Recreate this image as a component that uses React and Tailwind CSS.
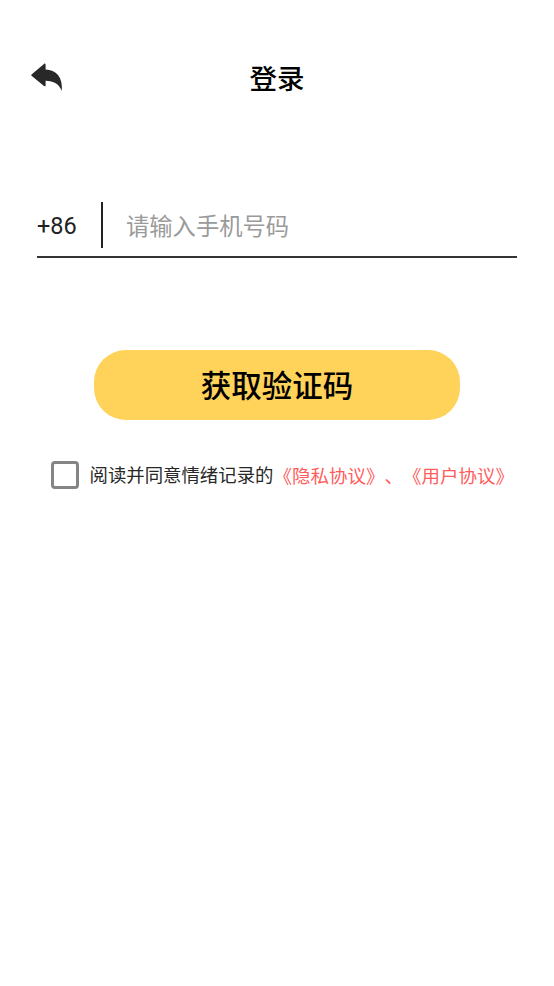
import React, { useState } from "react";

const LoginPage = () => {
  const [phone, setPhone] = useState("");
  const [agreed, setAgreed] = useState(false);

  return (
    <div className="min-h-screen bg-white font-[Roboto,'Noto_Sans_CJK_SC',sans-serif]">
      {/* Header */}
      <header className="grid h-[156px] grid-cols-[1fr_auto_1fr] items-center px-[30px]">
        <button aria-label="返回">
          <svg width="34" height="30" viewBox="0 0 34 30" fill="#282828">
            <path d="M1.500 11.500 14 1c.8-.7 1.600-.4 1.600.7v4.800C26 6.700 33 14 31.800 28c-3-7.500-8-10-16.200-10.300v4.500c0 1.200-.8 1.500-1.600.8L1.500 12.700c-.4-.4-.4-.8 0-1.200Z" />
          </svg>
        </button>
        <h1 className="pt-[3px] text-[27.500px] font-medium leading-10 text-black">登录</h1>
        <span />
      </header>

      {/* Phone number */}
      <div className="mx-[37px] mt-[46px] flex h-14 items-start border-b-2 border-[#333333]">
        <span className="w-16 text-[23.500px] leading-[48px] text-[#222222]">+86</span>
        <span className="h-[46px] w-0.5 bg-[#222222]" />
        <input
          type="tel"
          value={phone}
          onChange={(e) => setPhone(e.target.value)}
          placeholder="请输入手机号码"
          className="ml-[23px] h-[50px] flex-1 text-[23.300px] text-[#222222] outline-none placeholder:text-[#9a9a9a]"
        />
      </div>

      <button className="mx-auto mt-[92px] block h-[70px] w-[366px] rounded-[32px] bg-[#ffd25a] pt-[3px] text-[30.500px] font-medium text-black">
        获取验证码
      </button>

      {/* Agreement */}
      <div className="mt-[41px] flex items-start pl-[51px] text-[18.400px] leading-7 whitespace-nowrap [text-spacing-trim:space-all]">
        <input
          type="checkbox"
          checked={agreed}
          onChange={(e) => setAgreed(e.target.checked)}
          className="size-7 appearance-none rounded-[4px] border-[3px] border-[#858585] checked:bg-[#ffd25a]"
        />
        <span className="ml-[10.500px] pt-px text-[#282828]">阅读并同意情绪记录的</span>
        <span className="pt-0.5 text-[18.500px] text-[#ff5c5c]">《隐私协议》、《用户协议》</span>
      </div>
    </div>
  );
};

export default LoginPage;
